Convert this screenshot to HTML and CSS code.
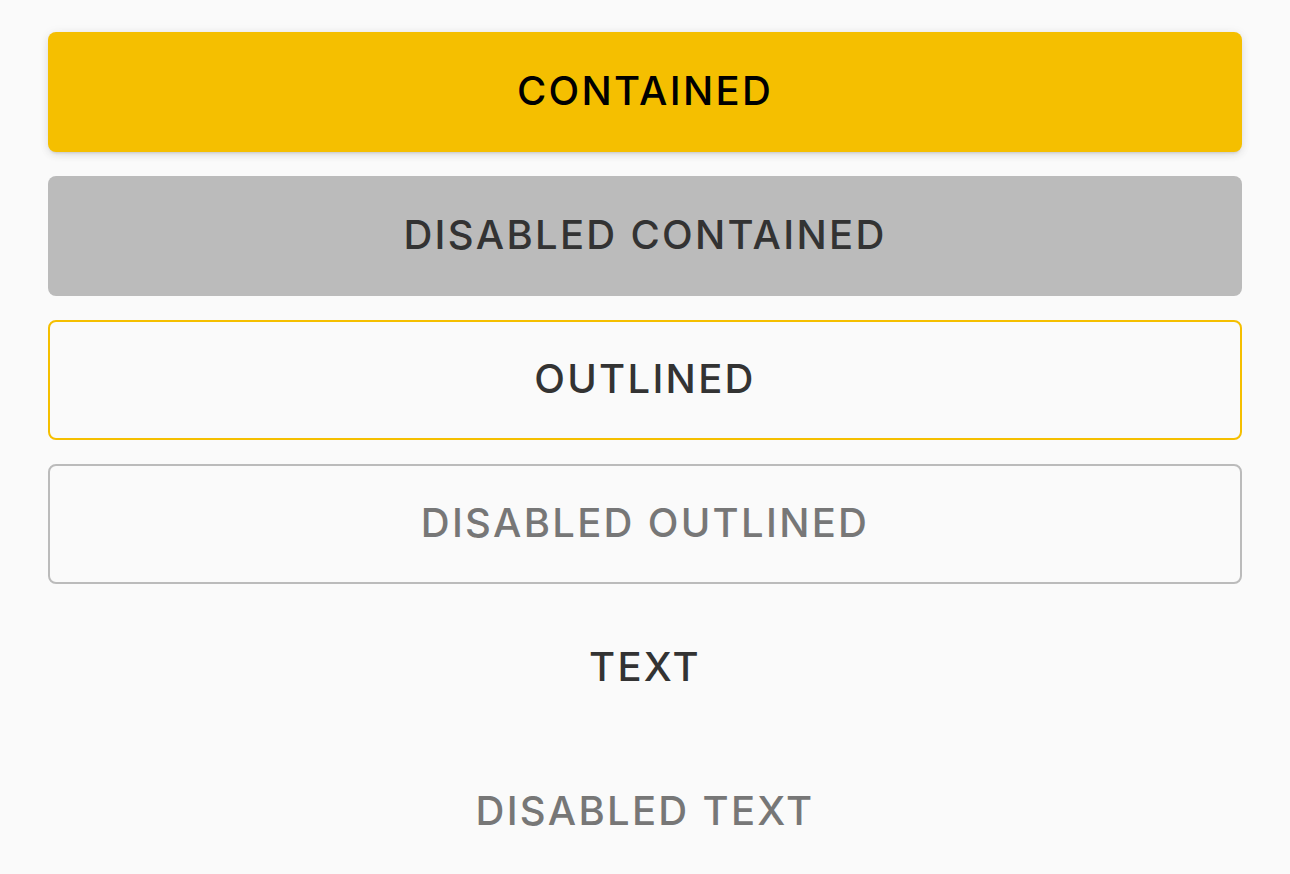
FILE: index.html
```html
<!DOCTYPE html>
<html>
<head>
<meta charset="utf-8">
<link rel="stylesheet" href="styles.css">
</head>
<body>
<div class="stack">
  <button class="btn contained">CONTAINED</button>
  <button class="btn contained-disabled">DISABLED CONTAINED</button>
  <button class="btn outlined">OUTLINED</button>
  <button class="btn outlined-disabled">DISABLED OUTLINED</button>
  <button class="btn text">TEXT</button>
  <button class="btn text-disabled">DISABLED TEXT</button>
</div>
</body>
</html>
```
FILE: styles.css
```css
html, body {
  margin: 0;
  padding: 0;
  background: #fafafa;
}
.stack {
  display: flex;
  flex-direction: column;
  gap: 24px;
  padding: 32px 48px 0 48px;
}
.btn {
  height: 120px;
  border-radius: 8px;
  border: none;
  background: transparent;
  font-family: Inter, "Noto Sans", sans-serif;
  font-size: 40px;
  font-weight: 500;
  letter-spacing: 2.3px;
  text-align: center;
  padding: 0 0 4px 0;
  margin: 0;
  box-sizing: border-box;
}
.contained {
  background: #f5bf00;
  color: #000;
  box-shadow: 0 3px 3px -2px rgba(0,0,0,0.12), 0 3px 8px 0 rgba(0,0,0,0.08), 0 1px 12px 0 rgba(0,0,0,0.06);
}
.contained-disabled {
  background: #bbbbbb;
  color: #333333;
}
.outlined {
  border: 2px solid #f5bf00;
  color: #333333;
}
.outlined-disabled {
  border: 2px solid #bbbbbb;
  color: #777777;
}
.text {
  color: #333333;
}
.text-disabled {
  color: #777777;
}
```
